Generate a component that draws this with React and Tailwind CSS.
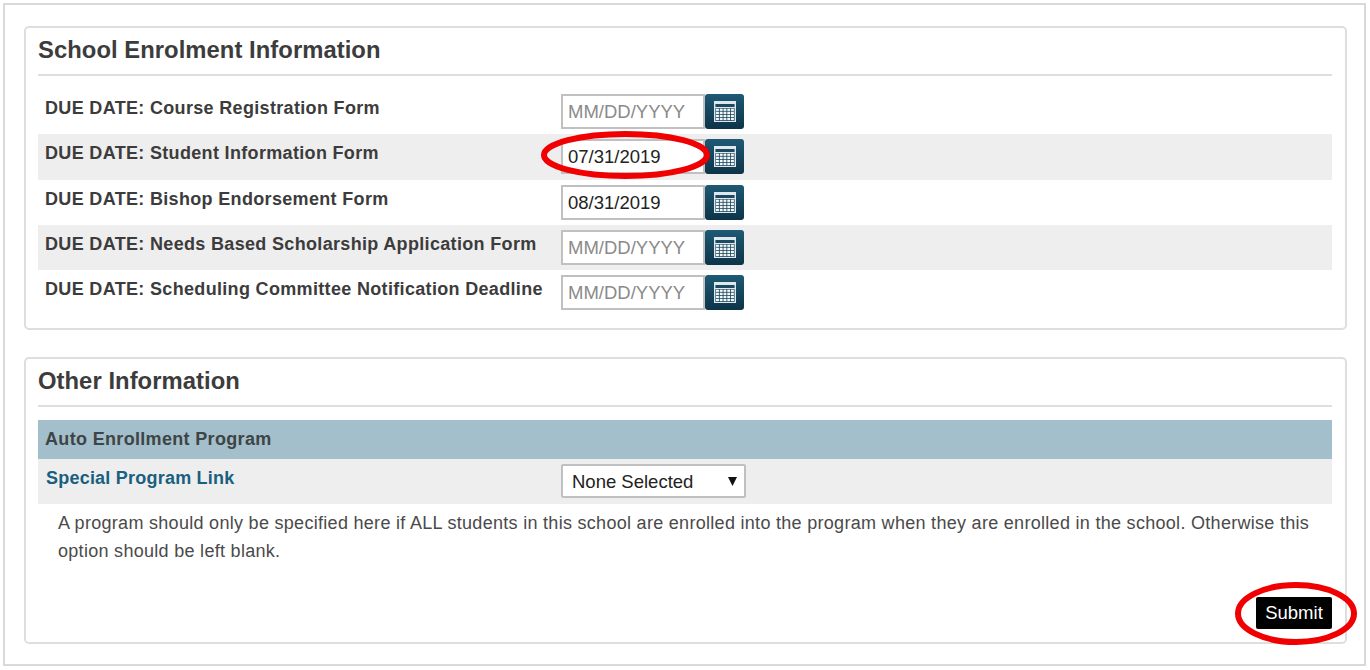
const font = { fontFamily: '"Liberation Sans", Arial, sans-serif' };

function CalIcon() {
  const cells = [];
  for (let r = 0; r < 4; r++) for (let c = 0; c < 5; c++)
    cells.push(<rect key={r + '-' + c} x={2 + c * 3.75} y={7.6 + r * 3.1} width="2.9" height="2.3" fill="#f4f7f8" />);
  return (
    <svg width="22" height="21" viewBox="0 0 22 21">
      <rect x="0" y="0" width="22" height="21" fill="#dfe8ec" />
      <rect x="1.4" y="3" width="19.2" height="3" fill="#1d4a63" />
      <rect x="1.4" y="7" width="19.2" height="13" fill="#1d4a63" />
      {cells}
    </svg>
  );
}

function DateRow({ label, value, grey }) {
  return (
    <div className={`flex h-[45.25px] pl-[7px] ${grey ? 'bg-[#eeeeee]' : ''}`}>
      <div className="w-[516px] pt-[8px] text-[18px] leading-[22px] font-bold tracking-[0.33px] text-[#3c3c3c] whitespace-nowrap">{label}</div>
      <div className="flex h-[35px] mt-[5px]">
        <div className={`w-[144px] h-[35px] border-2 border-[#c0c0c0] bg-white pl-[5px] text-[18.5px] leading-[32px] ${value ? 'text-[#222222]' : 'text-[#8a8a8a]'}`}>
          {value || 'MM/DD/YYYY'}
        </div>
        <div className="w-[39px] h-[35px] rounded-[3px] bg-gradient-to-b from-[#1f5975] to-[#0d3448] flex items-center justify-center">
          <CalIcon />
        </div>
      </div>
    </div>
  );
}

function Card({ title, className, children }) {
  return (
    <section className={`w-[1323px] border-2 border-[#dedede] rounded-[5px] pl-[12px] pr-[13px] bg-white ${className}`}>
      <h2 className="h-[48px] pt-[8px] border-b-2 border-[#dedede] text-[23.8px] leading-[28px] tracking-[0.05px] font-bold text-[#3c3c3c] whitespace-nowrap">{title}</h2>
      {children}
    </section>
  );
}

export default function App() {
  return (
    <div style={font} className="w-[1370px] h-[670px] bg-white p-[3px] overflow-hidden relative">
      <div className="w-[1363px] h-[663px] border-[2px] border-[#d9d9d9] px-[19px] pt-[21px]">
        <Card title="School Enrolment Information" className="h-[304px]">
          <div className="mt-[13px]">
            <DateRow label="DUE DATE: Course Registration Form" />
            <DateRow grey label="DUE DATE: Student Information Form" value="07/31/2019" />
            <DateRow label="DUE DATE: Bishop Endorsement Form" value="08/31/2019" />
            <DateRow grey label="DUE DATE: Needs Based Scholarship Application Form" />
            <DateRow label="DUE DATE: Scheduling Committee Notification Deadline" />
          </div>
        </Card>
        <Card title="Other Information" className="h-[287px] mt-[27px]">
          <div className="mt-[13px] h-[39px] bg-[#a3bfcb] pl-[7px] text-[18px] leading-[39px] font-bold tracking-[0.33px] text-[#3f4446]">Auto Enrollment Program</div>
          <div className="flex h-[45px] bg-[#eeeeee] pl-[8px]">
            <div className="w-[515px] pt-[8px] text-[18px] leading-[22px] font-bold tracking-[0.22px] text-[#1a5f7f]">Special Program Link</div>
            <div className="w-[185px] h-[34px] mt-[5px] border-2 border-[#c0c0c0] rounded-[2px] bg-white pl-[9px] pr-[7px] pt-[1px] flex items-center justify-between text-[18.5px] text-[#222222]">
              <span>None Selected</span>
              <svg width="9" height="9" viewBox="0 0 9 9"><path d="M0 0H9L4.5 9Z" fill="#111111" /></svg>
            </div>
          </div>
          <p className="pl-[20px] pr-[16px] pt-[5px] text-[18px] leading-[28px] tracking-[0.295px] text-[#4a4a4a]">
            A program should only be specified here if ALL students in this school are enrolled into the program when they are enrolled in the school. Otherwise this option should be left blank.
          </p>
          <div className="flex justify-end mt-[32px]">
            <button className="w-[76px] h-[32px] rounded-[2px] bg-black text-white text-[18.5px] leading-[32px]">Submit</button>
          </div>
        </Card>
      </div>
      <svg className="absolute left-0 top-0 pointer-events-none" width="1370" height="670">
        <ellipse cx="625.5" cy="155" rx="81.5" ry="21" fill="none" stroke="#f00000" strokeWidth="6" />
        <ellipse cx="1296" cy="613.5" rx="58" ry="28.5" fill="none" stroke="#f00000" strokeWidth="6" />
      </svg>
    </div>
  );
}
